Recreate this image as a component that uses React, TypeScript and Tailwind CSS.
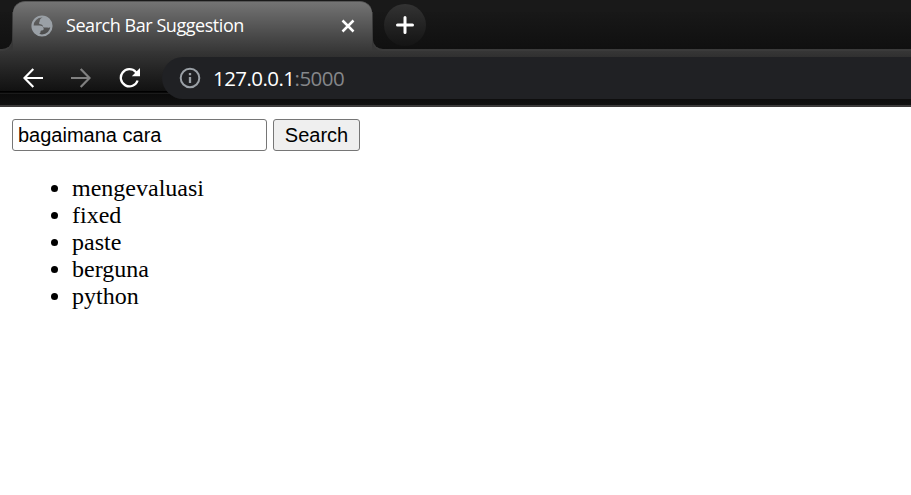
const suggestions = ["mengevaluasi", "fixed", "paste", "berguna", "python"];

function GlobeIcon() {
  return (
    <svg width="22" height="22" viewBox="0 0 22 22" fill="none" className="shrink-0">
      <circle cx="11" cy="11" r="9.500" stroke="#9aa0a6" strokeWidth="2.200" />
      <path
        d="M12 1.500C11.500 3 8.800 3.600 8.800 5.500c0 1.300-.8 1.500-.8 2.700 0 1.500 2.200.8 3.300 1.800.8.800.3 2.200 1.600 2.500 1.100.3 2.100-.2 3.100.1 1.300.400 2.300 0 4.300-.8C20.700 6 17 1.500 12 1.500Z"
        fill="#9aa0a6"
      />
      <path
        d="M1.500 10.500h6.800c2.500 0 4.400 1.200 4.400 3.300 0 1-.7 1.700-1.700 1.700-1 0-1.500.3-1.500 1.300 0 1-.4 1.700-1.200 1.900v1.800C4.500 19.500 1.500 15.500 1.500 10.500Z"
        fill="#9aa0a6"
      />
    </svg>
  );
}

function ArrowIcon({ color, forward = false }: { color: string; forward?: boolean }) {
  return (
    <svg width="20" height="20" viewBox="0 0 20 20" fill="none" stroke={color} strokeWidth="2.200" className={forward ? "rotate-180" : ""}>
      <path d="M20 10H1.800M10.300 1 1.500 10l8.800 9" />
    </svg>
  );
}

function ReloadIcon() {
  return (
    <svg width="22" height="22" viewBox="0 0 22 22" fill="none">
      <path d="M18.600 13.500A8.600 8.600 0 1 1 16.800 5L18.500 7" stroke="white" strokeWidth="2.300" />
      <path d="M21 1V9.200H12.800Z" fill="white" />
    </svg>
  );
}

function InfoIcon() {
  return (
    <svg width="22" height="22" viewBox="0 0 22 22" fill="none" stroke="#9aa0a6" strokeWidth="2">
      <circle cx="11" cy="11" r="9.300" />
      <path d="M11 10v6M11 6v2.200" strokeWidth="2.300" />
    </svg>
  );
}

function TabStrip() {
  return (
    <div className="flex h-[51px]">
      <div className="flex w-[13px] shrink-0 flex-col">
        <div className="h-3 bg-[#191919]" />
        <div className="flex-1 rounded-br-[11px] border-r border-b-2 border-[#3b3b3b] bg-linear-to-b from-[#181818] to-[#111111]" />
      </div>
      <div className="h-3 w-[359px] shrink-0 bg-[#191919] pt-px">
        <div className="flex h-[50px] items-center rounded-t-[12px] border-t border-[#555] bg-linear-to-b from-[#747474] via-[#555555] via-50% to-[#373737] pr-[17px] pb-[2px] pl-[18px]">
          <GlobeIcon />
          <span className="-mt-[2px] ml-[13px] font-['Open_Sans',sans-serif] text-[18px] leading-6 tracking-[-0.45px] whitespace-nowrap text-white">
            Search Bar Suggestion
          </span>
          <svg width="14" height="14" viewBox="0 0 14 14" className="ml-auto shrink-0">
            <path d="M1.500 1.500 12.500 12.500M12.500 1.500 1.500 12.500" stroke="white" strokeWidth="2.500" />
          </svg>
        </div>
      </div>
      <div className="flex flex-1 flex-col">
        <div className="h-3 bg-[#191919]" />
        <div className="flex-1 rounded-bl-[11px] border-b-2 border-l border-[#3b3b3b] bg-linear-to-b from-[#181818] to-[#101010] pl-[11px]">
          <div className="-mt-2 flex h-[42px] w-[42px] items-center justify-center rounded-full bg-linear-to-b from-[#333] to-[#141414]">
            <svg width="18" height="18" viewBox="0 0 18 18">
              <path d="M9 1.500v15M1.500 9h15" stroke="white" strokeWidth="3" strokeLinecap="round" />
            </svg>
          </div>
        </div>
      </div>
    </div>
  );
}

function Toolbar() {
  return (
    <div className="bg-linear-to-b from-[#363636] via-[#111111] via-75% to-[#0c0c0c]">
      <div className="h-[40px]">
        <div className="flex h-[54px] pt-[6px]">
          <div className="flex h-[42px] w-[162px] shrink-0 items-center pl-[23px]">
            <ArrowIcon color="white" />
            <div className="ml-7 flex">
              <ArrowIcon color="#808080" forward />
            </div>
            <div className="ml-7">
              <ReloadIcon />
            </div>
          </div>
          <div className="relative flex h-[42px] flex-1 items-center rounded-l-full bg-[#202124] pl-[17px]">
            <InfoIcon />
            <span className="ml-3 font-['Open_Sans',sans-serif] text-[20.500px] leading-7 tracking-[-0.55px] text-white">
              127.0.0.1<span className="text-[#85878a]">:5000</span>
            </span>
          </div>
        </div>
      </div>
      <div className="h-px bg-black" />
      <div className="h-px bg-[#080808]" />
      <div className="h-px bg-[#1b1b1b]" />
      <div className="h-[11px] bg-linear-to-b from-[#0b0b0b] to-[#111111]" />
    </div>
  );
}

export default function App() {
  return (
    <div className="h-[495px] w-[911px] overflow-hidden bg-white text-black">
      <header className="h-[107px] border-b-2 border-[#3c3a3a] bg-[#373737]">
        <TabStrip />
        <Toolbar />
      </header>
      <main className="px-3 pt-3">
        <div className="flex gap-[6px] font-['Liberation_Sans',Arial,sans-serif] text-[20px]">
          <input
            type="text"
            defaultValue="bagaimana cara"
            className="h-8 w-[255px] rounded-[3px] border border-[#767676] bg-white px-[5px]"
          />
          <button className="h-8 w-[87px] rounded-[3px] border border-[#767676] bg-[#efefef]">Search</button>
        </div>
        <ul className="mt-6 list-disc pl-[60px] font-['Liberation_Serif','Times_New_Roman',serif] text-[24px] leading-[27px]">
          {suggestions.map((word) => (
            <li key={word}>{word}</li>
          ))}
        </ul>
      </main>
    </div>
  );
}
